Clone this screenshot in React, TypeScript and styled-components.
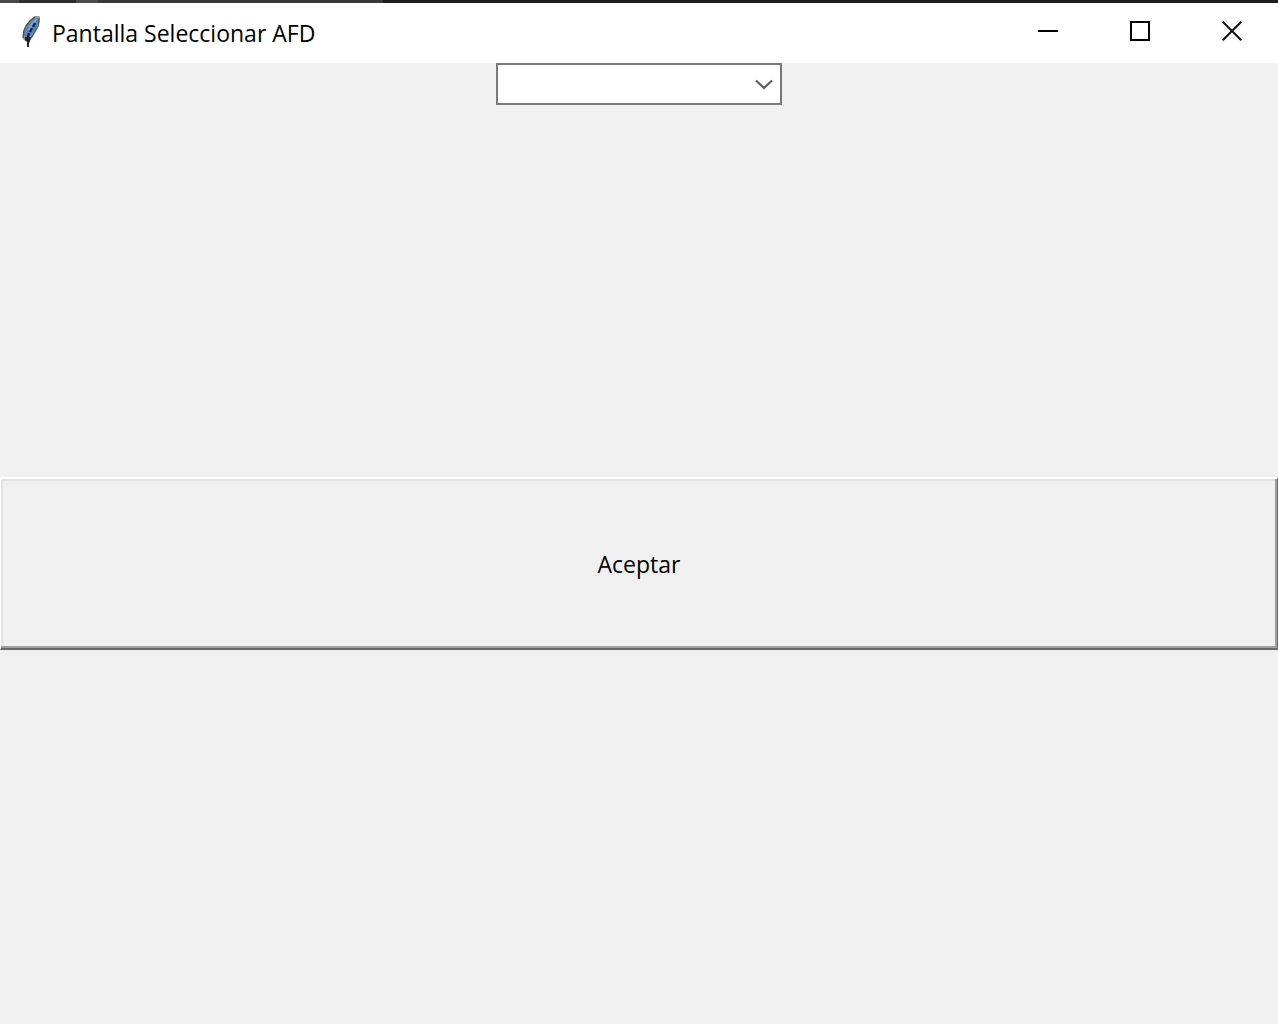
import React from 'react';
import styled, { createGlobalStyle } from 'styled-components';

const GlobalStyle = createGlobalStyle`
  *, *::before, *::after { box-sizing: border-box; }
  body {
    margin: 0;
    background: #f0f0f0;
    color: #000;
    font-family: "Open Sans", "Noto Sans", sans-serif;
  }
`;

const Window = styled.div`
  display: flex;
  flex-direction: column;
  min-height: 100vh;
`;

const Backdrop = styled.div`
  height: 3px;
  background: linear-gradient(
    to right,
    #484848 0 19px,
    #2f2c2f 19px 76px,
    #4b4b4b 76px 98px,
    #383838 98px 383px,
    #1f1c1f 383px
  );
`;

const TitleBar = styled.header`
  display: flex;
  align-items: center;
  height: 60px;
  padding-left: 20px;
  background: #fff;
`;

const Title = styled.h1`
  flex: 1;
  margin: 0 0 0 10px;
  font-size: 23px;
  font-weight: 400;
  line-height: 32px;
`;

const WindowButtons = styled.div`
  display: flex;
  align-self: stretch;
`;

const WindowButton = styled.button`
  display: flex;
  align-items: center;
  justify-content: center;
  width: 92px;
  padding: 0 0 4px;
  border: 0;
  background: transparent;
  &:hover { background: #e5e5e5; }
`;

const Content = styled.main`
  display: flex;
  flex-direction: column;
  align-items: center;
  gap: 372px;
`;

const Combo = styled.div`
  position: relative;
  width: 286px;
  height: 42px;
`;

const ComboSelect = styled.select`
  appearance: none;
  display: block;
  width: 100%;
  height: 100%;
  padding: 0 36px 0 8px;
  border: 2px solid #7a7a7a;
  border-radius: 0;
  background: #fff;
  font: inherit;
  font-size: 23px;
`;

const ComboArrow = styled.svg`
  position: absolute;
  top: 16px;
  right: 9px;
  pointer-events: none;
`;

const AcceptButton = styled.button`
  width: 100%;
  height: 173px;
  padding: 0;
  border-style: solid;
  border-width: 2px 1px;
  border-color: #fff #696969 #696969 #fff;
  background: #f0f0f0;
  box-shadow: inset -2px -2px #a0a0a0, inset 2px 2px #e3e3e3;
  color: #000;
  font-family: inherit;
  font-size: 23px;
  line-height: 32px;
`;

function Feather() {
  return (
    <svg width="22" height="34" viewBox="0 0 22 34" aria-hidden="true">
      <path d="M19 0H15L10 4L6 9L3 15V23L5 25H10L14 19L18 12L20 6V1Z" fill="#9a9a98" />
      <path d="M18 2L14 3L9 8L6 13L4 19L5 23L9 22L13 17L17 10Z" fill="#4a86cc" />
      <path d="M15 3L10 9L8 14L10 14L14 9L17 3Z" fill="#74a9e6" />
      <path d="M15 1L10 5L6 10L4 15L3 22" fill="none" stroke="#4c4c4c" strokeWidth="1.4" />
      <path d="M19 2L18 10L14 17L11 22" fill="none" stroke="#5e5e5e" strokeWidth="1.4" />
      <path d="M15 7L13 11M12 12L10 16M9 17L8 21" fill="none" stroke="#152433" strokeWidth="2.4" />
      <path d="M5 21L11 21L10 25L9 27V31H7V26L5 24Z" fill="#222" />
    </svg>
  );
}

export default function App() {
  return (
    <>
      <GlobalStyle />
      <Window>
        <Backdrop />
        <TitleBar>
          <Feather />
          <Title>Pantalla Seleccionar AFD</Title>
          <WindowButtons>
            <WindowButton type="button" aria-label="Minimizar">
              <svg width="20" height="20" viewBox="0 0 20 20">
                <path d="M0 10H20" stroke="#000" strokeWidth="2" />
              </svg>
            </WindowButton>
            <WindowButton type="button" aria-label="Maximizar">
              <svg width="20" height="20" viewBox="0 0 20 20">
                <rect x="1" y="1" width="18" height="18" fill="none" stroke="#000" strokeWidth="2" />
              </svg>
            </WindowButton>
            <WindowButton type="button" aria-label="Cerrar">
              <svg width="20" height="20" viewBox="0 0 20 20">
                <path d="M0.7 0.7L19.3 19.3M19.3 0.7L0.7 19.3" stroke="#111" strokeWidth="2" />
              </svg>
            </WindowButton>
          </WindowButtons>
        </TitleBar>
        <Content>
          <Combo>
            <ComboSelect aria-label="AFD" defaultValue="">
              <option value="" />
            </ComboSelect>
            <ComboArrow width="18" height="12" viewBox="0 0 18 12" aria-hidden="true">
              <path d="M1 1.5L9 9L17 1.5" fill="none" stroke="#5c5c5c" strokeWidth="2.2" />
            </ComboArrow>
          </Combo>
          <AcceptButton type="button">Aceptar</AcceptButton>
        </Content>
      </Window>
    </>
  );
}
